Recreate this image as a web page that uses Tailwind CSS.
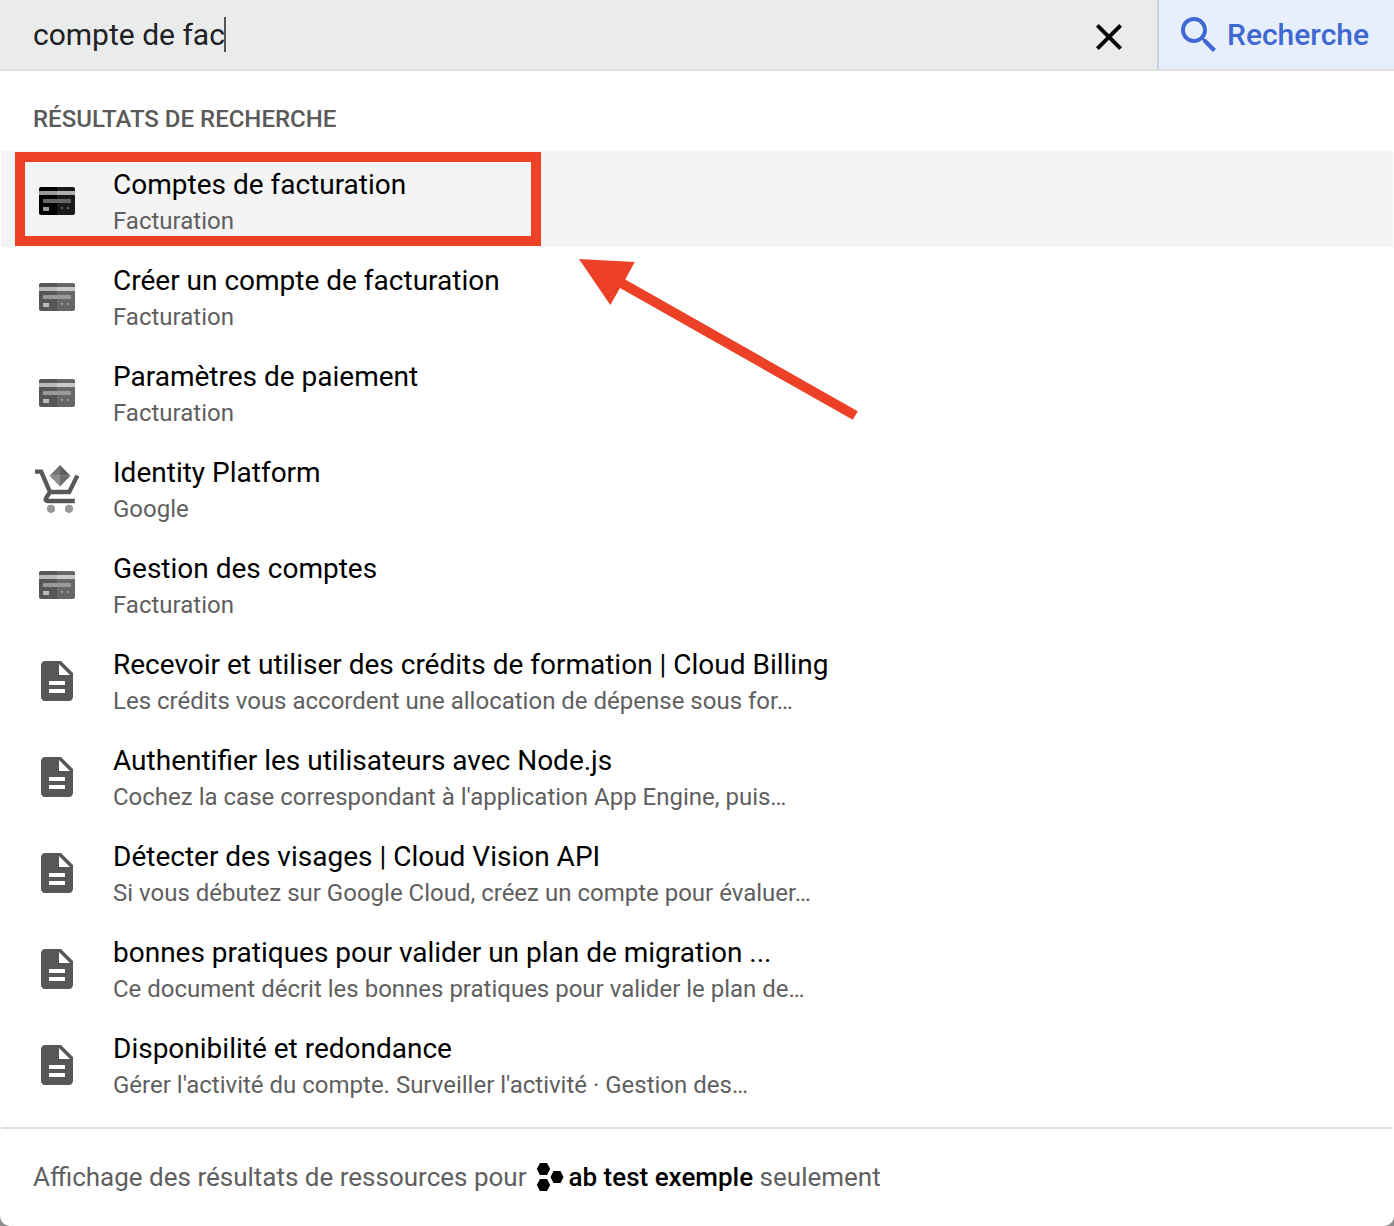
<!DOCTYPE html>
<html lang="fr">

<head>
    <meta charset="UTF-8">
    <meta name="viewport" content="width=device-width, initial-scale=1.0">
    <script src="https://cdn.jsdelivr.net/npm/@tailwindcss/browser@4"></script>
    <title>Recherche | Google Cloud</title>
</head>

<body class="bg-[#8c8c8c] font-[Roboto,sans-serif]">
    <!-- Shared icons -->
    <svg class="hidden">
        <symbol id="icon-card" viewBox="0 0 48 48">
            <path d="M8 10h16v28H8a2 2 0 0 1-2-2V12a2 2 0 0 1 2-2z" fill="#000" />
            <path d="M24 10h16a2 2 0 0 1 2 2v24a2 2 0 0 1-2 2H24z" fill="#1a1a1a" />
            <path d="M6 14h18v4H6z" fill="#999" />
            <path d="M24 14h18v4H24z" fill="#b0b0b0" />
            <path d="M10 22h28v4H10zM28 30h2v2h-2zM34 30h2v2h-2z" fill="#666" />
            <path d="M10 30h6v4h-6z" fill="#999" />
        </symbol>
        <symbol id="icon-doc" viewBox="0 0 24 24">
            <path fill="#575757" d="M14 2H6c-1.1 0-1.99.9-1.99 2L4 20c0 1.1.89 2 1.99 2H18c1.1 0 2-.9 2-2V8l-6-6zm2 16H8v-2h8v2zm0-4H8v-2h8v2zm-3-5V3.5L18.5 9H13z" />
        </symbol>
        <symbol id="icon-cart" viewBox="0 0 48 56">
            <path d="M2 11.7H8.2L17 32H36.2L44.4 15.6M17 32L13 38.2C12 40 13 41 14.8 41H41.8" fill="none" stroke="#575757" stroke-width="4.3" />
            <path d="M27 5L16.5 15.7H27z" fill="#757575" />
            <path d="M27 5L37.5 15.7H27z" fill="#5f5f5f" />
            <path d="M27 26.5L16.5 15.7H27z" fill="#8c8c8c" />
            <path d="M27 26.5L37.5 15.7H27z" fill="#6e6e6e" />
            <circle cx="18" cy="48.8" r="4.1" fill="#999" />
            <circle cx="36" cy="48.8" r="4.1" fill="#999" />
        </symbol>
    </svg>

    <div class="relative h-[1226px] w-[1394px] overflow-hidden rounded-b-[10px] bg-white">
        <!-- Search bar -->
        <header class="flex h-[71px] border-b-2 border-[#dfdfdf] bg-[#eaeceb]">
            <div class="flex flex-1 items-center pl-[33px]">
                <span class="text-[30px] text-[#202124]">compte de fac</span>
                <span class="-ml-px h-[35px] w-0.5 bg-[#555]"></span>
            </div>
            <button class="mr-[26px] pt-[5px]" aria-label="Effacer">
                <svg class="h-11 w-11" viewBox="0 0 24 24">
                    <path d="M19 6.41L17.59 5 12 10.59 6.41 5 5 6.41 10.59 12 5 17.59 6.41 19 12 13.41 17.59 19 19 17.59 13.41 12z" stroke="#000" stroke-width=".2" />
                </svg>
            </button>
            <button class="flex w-[237px] items-center border-l-2 border-[#c9d0e1] bg-[#e8effc] pl-4 text-[30px] font-medium text-[#3f68d3]">
                <svg class="mr-1 h-12 w-12" viewBox="0 0 24 24" fill="currentColor">
                    <path d="M15.5 14h-.79l-.28-.27C15.41 12.59 16 11.11 16 9.5 16 5.91 13.09 3 9.5 3S3 5.91 3 9.5 5.91 16 9.5 16c1.61 0 3.09-.59 4.23-1.57l.27.28v.79l5 4.99L20.49 19l-4.99-5zm-6 0C7.01 14 5 11.99 5 9.5S7.01 5 9.5 5 14 7.01 14 9.5 11.99 14 9.5 14z" />
                </svg>
                Recherche
            </button>
        </header>

        <h2 class="flex h-20 items-center pt-4 pl-[33px] text-2xl font-medium text-[#5a5a5a]">RÉSULTATS DE RECHERCHE</h2>

        <!-- Results, filled in by the script below -->
        <ul id="results" class="mx-px mb-4"></ul>

        <!-- Footer -->
        <footer class="mx-px flex h-[99px] items-center border-t-2 border-[#dfdfdf] pl-8 text-[26px] whitespace-pre text-[#5f5f5f]">
            <span>Affichage des résultats de ressources pour</span>
            <svg class="ml-[9.5px] mr-1 mb-0.5 h-7 w-7" viewBox="0 0 28 28">
                <path d="M4 0h7l3.2 6L11 12H4L.8 6zM4 16h7l3.2 6-3.2 6H4L.8 22zM17.5 8h7l3 6-3 6h-7l-3-6z" />
            </svg>
            <span class="pl-[0.5px]"><b class="font-medium text-black">ab test exemple</b> seulement</span>
        </footer>

        <!-- Highlight around the first result, and the arrow to it -->
        <div class="absolute top-[152px] left-[15px] h-[94px] w-[526px] border-10 border-[#ec4127]"></div>
        <svg class="absolute top-[250px] left-[570px] h-[180px] w-[300px]" viewBox="570 250 300 180">
            <path d="M579 259L634.7 262 625.3 279.5 857.8 411.2 852.8 419.8 620 288 610.3 305z" fill="#ec4127" />
        </svg>
    </div>

    <script>
        const results = [
            ["card", "Comptes de facturation", "Facturation"],
            ["card", "Créer un compte de facturation", "Facturation"],
            ["card", "Paramètres de paiement", "Facturation"],
            ["cart", "Identity Platform", "Google"],
            ["card", "Gestion des comptes", "Facturation"],
            ["doc", "Recevoir et utiliser des crédits de formation | Cloud Billing", "Les crédits vous accordent une allocation de dépense sous for…"],
            ["doc", "Authentifier les utilisateurs avec Node.js", "Cochez la case correspondant à l'application App Engine, puis…"],
            ["doc", "Détecter des visages | Cloud Vision API", "Si vous débutez sur Google Cloud, créez un compte pour évaluer…"],
            ["doc", "bonnes pratiques pour valider un plan de migration ...", "Ce document décrit les bonnes pratiques pour valider le plan de…"],
            ["doc", "Disponibilité et redondance", "Gérer l'activité du compte. Surveiller l'activité · Gestion des…"]
        ];

        document.getElementById("results").innerHTML = results.map(([icon, title, subtitle], i) => {
            const rowColor = i === 0 ? "bg-[#f4f4f4]" : "";
            const iconSize = icon === "cart" ? "h-14 -mt-[5px]" : "h-12";
            const iconFade = icon === "card" && i > 0 ? "opacity-66" : "";
            return `
                <li class="flex h-24 pl-8 ${rowColor}">
                    <div class="pt-[26px]">
                        <svg class="w-12 ${iconSize} ${iconFade}"><use href="#icon-${icon}" /></svg>
                    </div>
                    <div class="ml-8 pt-4">
                        <p class="text-[28px] leading-9 text-black">${title}</p>
                        <p class="text-2xl leading-9 text-[#5f5f5f]">${subtitle}</p>
                    </div>
                </li>`;
        }).join("");
    </script>
</body>

</html>
